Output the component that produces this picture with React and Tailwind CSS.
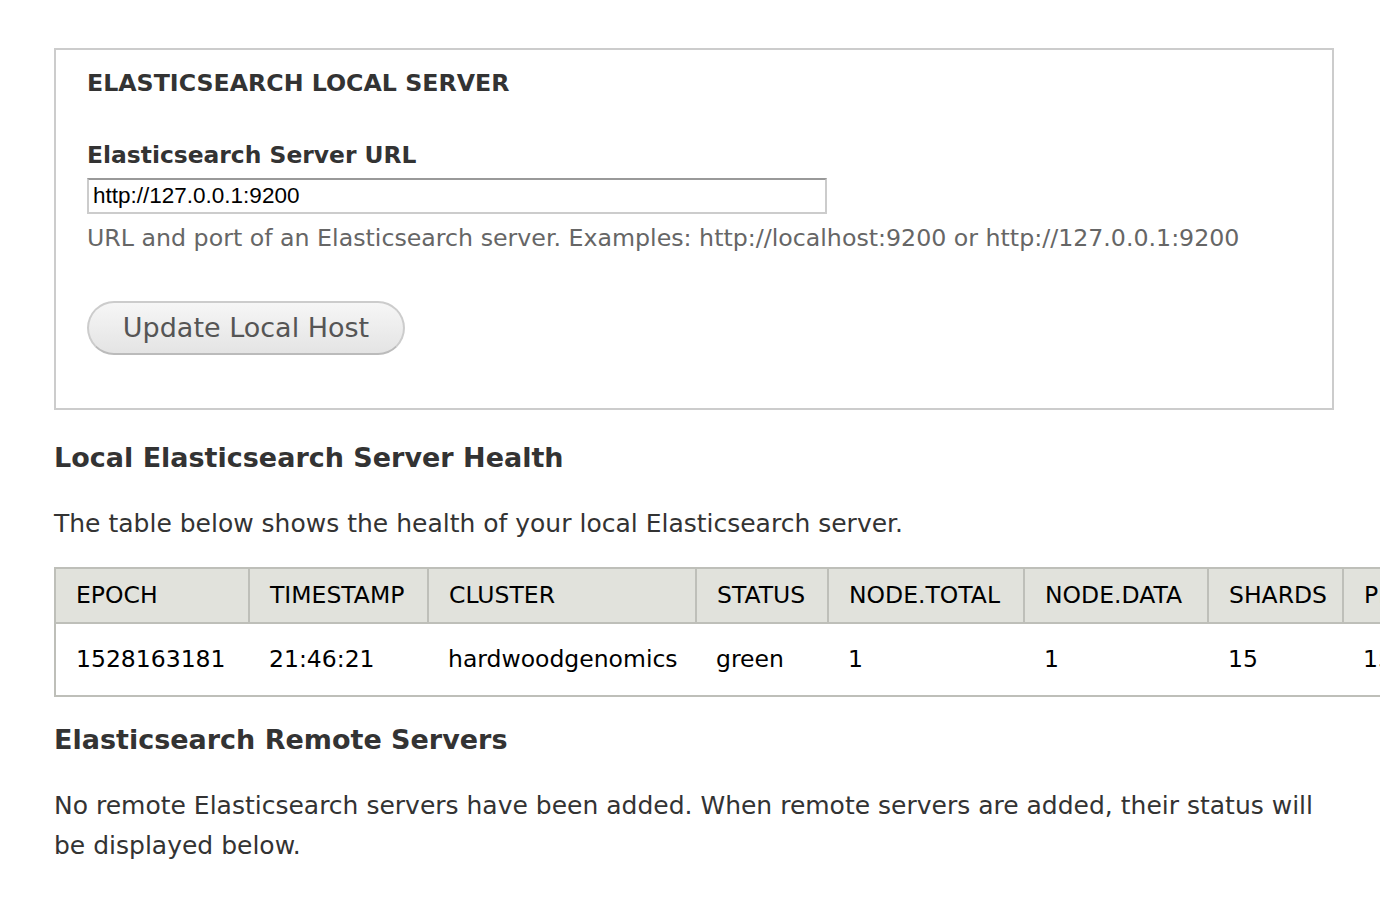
export default function App() {
  const font = { fontFamily: '"DejaVu Sans", "Lucida Grande", sans-serif' };
  const cols = [
    { h: "EPOCH", v: "1528163181", w: 194 },
    { h: "TIMESTAMP", v: "21:46:21", w: 179 },
    { h: "CLUSTER", v: "hardwoodgenomics", w: 268 },
    { h: "STATUS", v: "green", w: 132 },
    { h: "NODE.TOTAL", v: "1", w: 196 },
    { h: "NODE.DATA", v: "1", w: 184 },
    { h: "SHARDS", v: "15", w: 135 },
    { h: "PRI", v: "15", w: 100 },
    { h: "RELO", v: "0", w: 110 },
  ];
  const total = cols.reduce((a, c) => a + c.w, 0);
  return (
    <div className="w-[1380px] h-[898px] overflow-hidden bg-white text-[#333]" style={font}>
      <div className="pl-[54px] pt-[48px]">
        <div className="w-[1280px] border-2 border-[#ccc] pl-[31px] pt-[16px] pb-[53px]">
          <div className="text-[23.7px] font-bold leading-[34px] text-[#333]">ELASTICSEARCH LOCAL SERVER</div>
          <div className="mt-[38px] text-[23.4px] font-bold leading-[34px] text-[#333]">Elasticsearch Server URL</div>
          <div className="mt-[6px] w-[740px] h-[36px] border-2 border-[#ccc] border-t-[#999] flex items-center pl-[4px] text-[22.5px] text-black" style={{ fontFamily: '"Liberation Sans", Arial, sans-serif' }}>
            http://127.0.0.1:9200
          </div>
          <div className="mt-[7px] text-[23.7px] leading-[34px] text-[#666] whitespace-nowrap">
            URL and port of an Elasticsearch server. Examples: http://localhost:9200 or http://127.0.0.1:9200
          </div>
          <button className="mt-[46px] h-[54px] w-[318px] rounded-full border-2 border-[#ccc] border-b-[#bbb] bg-gradient-to-b from-[#f6f6f6] to-[#e4e4e4] text-[27px] text-[#555] flex items-center justify-center" style={font}>
            Update Local Host
          </button>
        </div>
        <div className="mt-[28px] text-[27px] font-bold leading-[40px] text-[#333]">Local Elasticsearch Server Health</div>
        <div className="mt-[26px] text-[25px] leading-[40px] text-[#333] whitespace-nowrap">The table below shows the health of your local Elasticsearch server.</div>
        <table className="mt-[23px] border-collapse text-black text-[23.5px] table-fixed" style={{ width: total + "px" }}>
          <colgroup>
            {cols.map((c) => (
              <col key={c.h} style={{ width: c.w + "px" }} />
            ))}
          </colgroup>
          <thead>
            <tr className="bg-[#e1e2dc]">
              {cols.map((c) => (
                <th key={c.h} className="h-[55px] border-2 border-[#bebfb9] pl-[20px] text-left font-normal whitespace-nowrap">{c.h}</th>
              ))}
            </tr>
          </thead>
          <tbody>
            <tr>
              {cols.map((c) => (
                <td key={c.h} className="h-[73px] border-y-2 border-[#bebfb9] first:border-l-2 pl-[20px] whitespace-nowrap">{c.v}</td>
              ))}
            </tr>
          </tbody>
        </table>
        <div className="mt-[23px] text-[27px] font-bold leading-[40px] text-[#333]">Elasticsearch Remote Servers</div>
        <div className="mt-[26px] w-[1270px] text-[25px] leading-[40px] text-[#333]">
          No remote Elasticsearch servers have been added. When remote servers are added, their status will be displayed below.
        </div>
      </div>
    </div>
  );
}
